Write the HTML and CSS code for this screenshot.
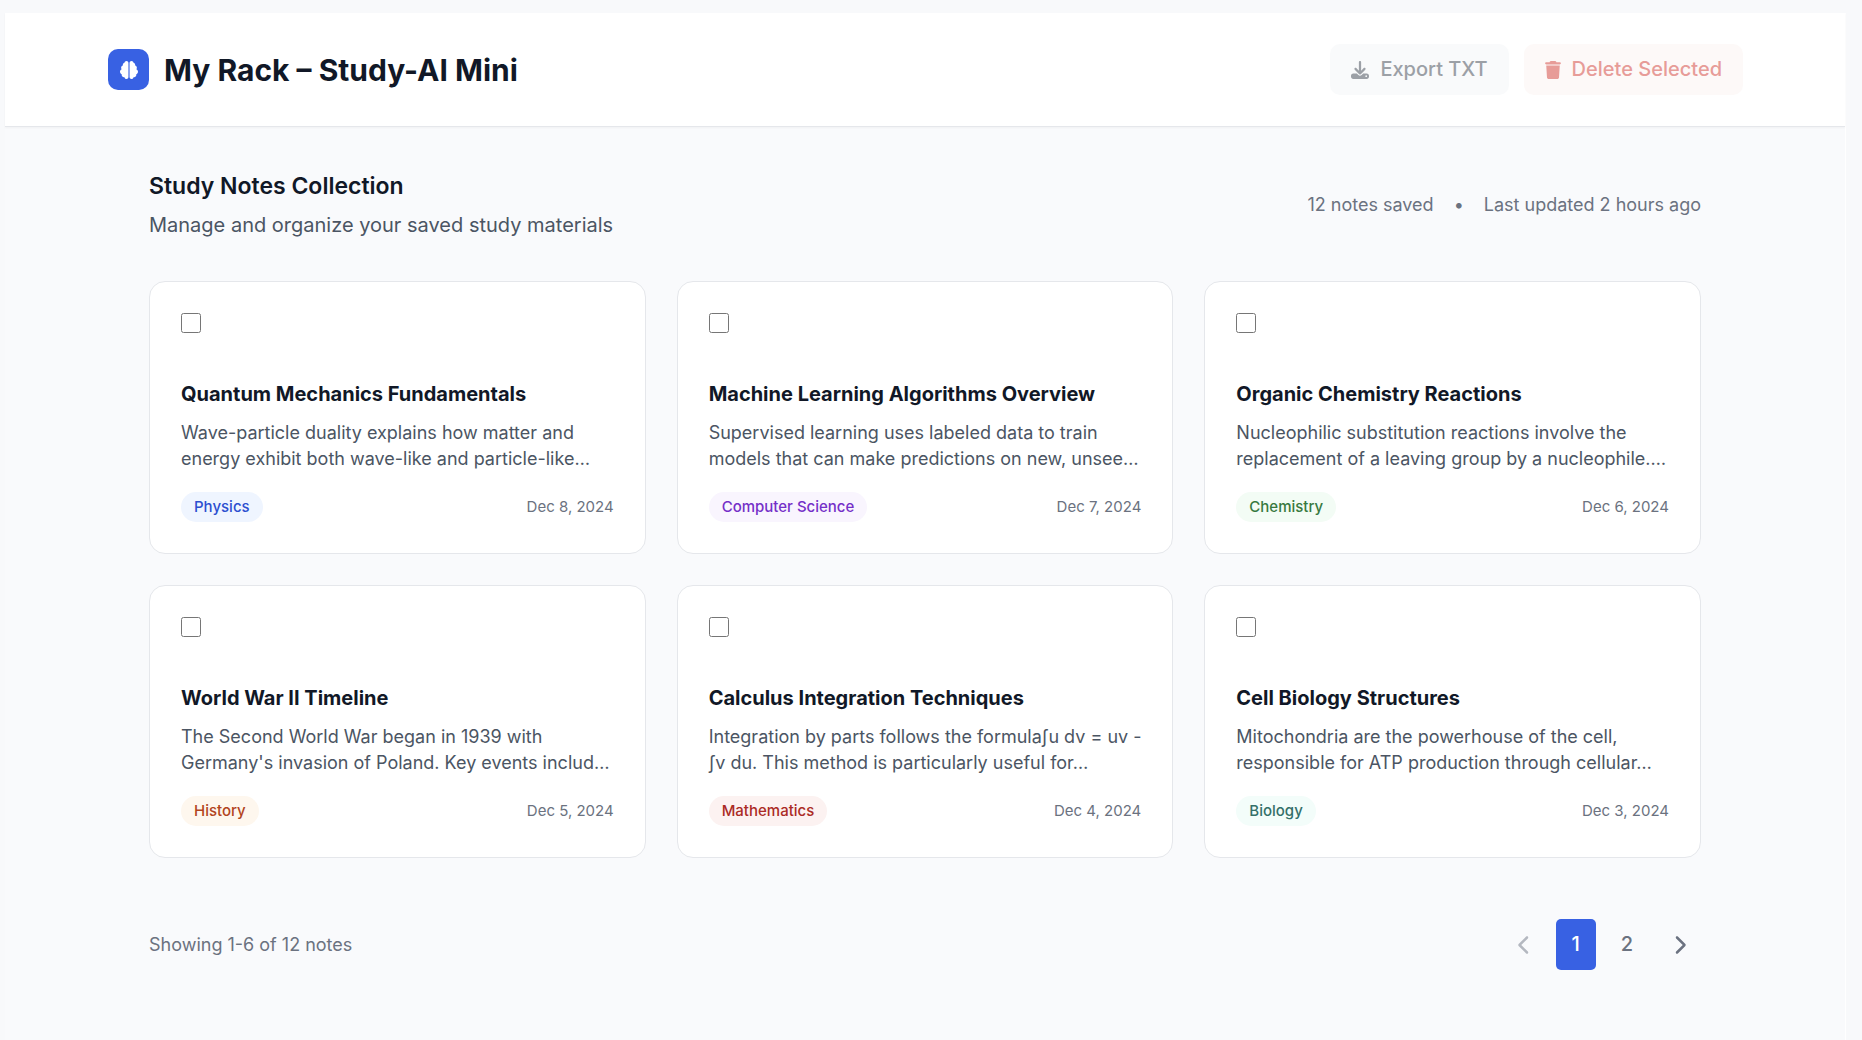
FILE: index.html
```html
<!DOCTYPE html>
<html lang="en">
<head>
<meta charset="utf-8">
<meta name="viewport" content="width=device-width, initial-scale=1">
<title>My Rack – Study-AI Mini</title>
<link rel="stylesheet" href="styles.css">
</head>
<body>
<div class="app">
  <header class="topbar">
    <div class="brand">
      <span class="brand-logo">
        <svg viewBox="0 0 512 512" width="18" height="18" fill="currentColor" aria-hidden="true"><path d="M184 0c30.900 0 56 25.100 56 56V456c0 30.900-25.100 56-56 56c-28.900 0-52.700-21.900-55.700-50.100c-5.200 1.400-10.700 2.100-16.300 2.100c-35.300 0-64-28.700-64-64c0-7.400 1.300-14.600 3.600-21.200C21.400 367.400 0 338.200 0 304c0-31.900 18.700-59.500 45.800-72.300C37.100 220.800 32 207 32 192c0-30.700 21.600-56.300 50.400-62.600C80.800 123.900 80 118 80 112c0-29.900 20.600-55.100 48.300-62.100C131.300 21.900 155.100 0 184 0zM328 0c28.900 0 52.600 21.900 55.700 49.900c27.800 7 48.300 32.100 48.300 62.100c0 6-.8 11.900-2.400 17.400c28.800 6.200 50.400 31.900 50.400 62.600c0 15-5.100 28.800-13.800 39.700C493.300 244.500 512 272.100 512 304c0 34.200-21.400 63.400-51.600 74.800c2.300 6.600 3.600 13.800 3.600 21.200c0 35.300-28.700 64-64 64c-5.600 0-11.100-.7-16.300-2.100c-3 28.200-26.800 50.100-55.700 50.100c-30.900 0-56-25.100-56-56V56c0-30.900 25.100-56 56-56z"/></svg>
      </span>
      <h1 class="brand-title">My Rack – Study-AI Mini</h1>
    </div>
    <div class="actions">
      <button type="button" class="btn btn-export" disabled>
        <svg viewBox="0 0 512 512" width="18" height="18" fill="currentColor" aria-hidden="true"><path d="M288 32c0-17.700-14.300-32-32-32s-32 14.300-32 32V274.700l-73.400-73.400c-12.500-12.500-32.800-12.500-45.300 0s-12.500 32.800 0 45.300l128 128c12.500 12.500 32.800 12.500 45.300 0l128-128c12.500-12.500 12.500-32.800 0-45.300s-32.800-12.500-45.300 0L288 274.700V32zM64 352c-35.300 0-64 28.700-64 64v32c0 35.300 28.700 64 64 64H448c35.300 0 64-28.700 64-64V416c0-35.300-28.700-64-64-64H346.500l-45.300 45.300c-25 25-65.500 25-90.500 0L165.500 352H64zm368 56a24 24 0 1 1 0 48 24 24 0 1 1 0-48z"/></svg>
        Export TXT
      </button>
      <button type="button" class="btn btn-delete" disabled>
        <svg viewBox="0 0 448 512" width="16" height="18" fill="currentColor" aria-hidden="true"><path d="M135.200 17.700L128 32H32C14.300 32 0 46.300 0 64S14.300 96 32 96H416c17.700 0 32-14.300 32-32s-14.300-32-32-32H320l-7.200-14.300C307.400 6.800 296.300 0 284.200 0H163.800c-12.100 0-23.200 6.800-28.600 17.700zM416 128H32L53.200 467c1.600 25.300 22.600 45 47.900 45H346.900c25.300 0 46.300-19.700 47.900-45L416 128z"/></svg>
        Delete Selected
      </button>
    </div>
  </header>

  <main class="content">
    <section class="intro">
      <div>
        <h2 class="intro-title">Study Notes Collection</h2>
        <p class="intro-text">Manage and organize your saved study materials</p>
      </div>
      <div class="stats">
        <span>12 notes saved</span>
        <span>•</span>
        <span>Last updated 2 hours ago</span>
      </div>
    </section>

    <section class="grid">
      <article class="card">
        <input type="checkbox" class="card-check" aria-labelledby="note-1">
        <h3 class="card-title" id="note-1">Quantum Mechanics Fundamentals</h3>
        <p class="card-text">Wave-particle duality explains how matter and energy exhibit both wave-like and particle-like…</p>
        <div class="card-foot"><span class="tag tag-blue">Physics</span><time datetime="2024-12-08">Dec 8, 2024</time></div>
      </article>
      <article class="card">
        <input type="checkbox" class="card-check" aria-labelledby="note-2">
        <h3 class="card-title" id="note-2">Machine Learning Algorithms Overview</h3>
        <p class="card-text">Supervised learning uses labeled data to train models that can make predictions on new, unsee…</p>
        <div class="card-foot"><span class="tag tag-purple">Computer Science</span><time datetime="2024-12-07">Dec 7, 2024</time></div>
      </article>
      <article class="card">
        <input type="checkbox" class="card-check" aria-labelledby="note-3">
        <h3 class="card-title" id="note-3">Organic Chemistry Reactions</h3>
        <p class="card-text">Nucleophilic substitution reactions involve the replacement of a leaving group by a nucleophile.…</p>
        <div class="card-foot"><span class="tag tag-green">Chemistry</span><time datetime="2024-12-06">Dec 6, 2024</time></div>
      </article>
      <article class="card">
        <input type="checkbox" class="card-check" aria-labelledby="note-4">
        <h3 class="card-title" id="note-4">World War II Timeline</h3>
        <p class="card-text">The Second World War began in 1939 with Germany's invasion of Poland. Key events includ…</p>
        <div class="card-foot"><span class="tag tag-orange">History</span><time datetime="2024-12-05">Dec 5, 2024</time></div>
      </article>
      <article class="card">
        <input type="checkbox" class="card-check" aria-labelledby="note-5">
        <h3 class="card-title" id="note-5">Calculus Integration Techniques</h3>
        <p class="card-text card-text-formula">Integration by parts follows the formula∫u dv = uv -<br>∫v du. This method is particularly useful for…</p>
        <div class="card-foot"><span class="tag tag-red">Mathematics</span><time datetime="2024-12-04">Dec 4, 2024</time></div>
      </article>
      <article class="card">
        <input type="checkbox" class="card-check" aria-labelledby="note-6">
        <h3 class="card-title" id="note-6">Cell Biology Structures</h3>
        <p class="card-text">Mitochondria are the powerhouse of the cell, responsible for ATP production through cellular…</p>
        <div class="card-foot"><span class="tag tag-teal">Biology</span><time datetime="2024-12-03">Dec 3, 2024</time></div>
      </article>
    </section>

    <div class="pager">
      <p class="pager-info">Showing 1-6 of 12 notes</p>
      <nav class="pager-nav" aria-label="Pages">
        <button type="button" class="page page-prev" aria-label="Previous page" disabled>
          <svg viewBox="0 0 320 512" width="13" height="20" fill="currentColor" aria-hidden="true"><path d="M9.400 233.400c-12.500 12.500-12.500 32.800 0 45.300l192 192c12.500 12.500 32.800 12.500 45.300 0s12.500-32.800 0-45.300L77.300 256 246.600 86.600c12.500-12.500 12.500-32.800 0-45.300s-32.800-12.500-45.300 0l-192 192z"/></svg>
        </button>
        <button type="button" class="page page-current" aria-current="page">1</button>
        <button type="button" class="page">2</button>
        <button type="button" class="page page-next" aria-label="Next page">
          <svg viewBox="0 0 320 512" width="13" height="20" fill="currentColor" aria-hidden="true"><path d="M310.600 233.400c12.500 12.500 12.500 32.800 0 45.300l-192 192c-12.500 12.500-32.800 12.500-45.300 0s-12.500-32.800 0-45.300L242.700 256 73.400 86.600c-12.500-12.500-12.500-32.800 0-45.300s32.800-12.500 45.300 0l192 192z"/></svg>
        </button>
      </nav>
    </div>
  </main>
</div>
</body>
</html>
```
FILE: styles.css
```css
* {
  box-sizing: border-box;
  margin: 0;
}

body {
  min-height: 100vh;
  display: flex;
  padding: 13px 16px 0 5px;
  background: #f8f9fb;
  color: #111827;
  font-family: Inter, "Liberation Sans", sans-serif;
}

.app {
  flex: 1;
  background: #f9fafc;
  border-right: 1px solid #fff;
}

.topbar {
  display: flex;
  justify-content: space-between;
  align-items: center;
  padding: 31px 102px 31px 103px;
  background: #fff;
  border-bottom: 1px solid #e5e7eb;
  box-shadow: 0 1px 2px rgba(0, 0, 0, 0.04);
}

.brand,
.actions {
  display: flex;
  align-items: center;
  gap: 15px;
}

.brand-logo {
  display: flex;
  align-items: center;
  justify-content: center;
  width: 41px;
  height: 41px;
  border-radius: 10px;
  background: #3861e3;
  color: #fff;
}

.brand-title {
  font-size: 30px;
  line-height: 40px;
  font-weight: 700;
}

.btn {
  display: flex;
  align-items: center;
  gap: 11px;
  padding: 10px 21px;
  border: 0;
  border-radius: 10px;
  font: 500 20px/31px Inter, "Liberation Sans", sans-serif;
}

.btn-export {
  background: #f9fafb;
  color: #9ca0a6;
}

.btn-delete {
  background: #fdf9f8;
  color: #e79c98;
}

.content {
  max-width: 1614px;
  margin: 0 auto;
  padding: 41px 31px;
}

.intro {
  display: flex;
  justify-content: space-between;
  align-items: center;
  margin-bottom: 40px;
}

.intro-title {
  margin-bottom: 6px;
  font-size: 23px;
  line-height: 36px;
  font-weight: 600;
}

.intro-text {
  color: #4b5563;
  font-size: 20px;
  line-height: 31px;
}

.stats {
  display: flex;
  gap: 20px;
  color: #6b7280;
  font-size: 18px;
  line-height: 26px;
}

.grid {
  display: grid;
  grid-template-columns: repeat(3, minmax(0, 1fr));
  gap: 31px;
}

.card {
  padding: 31px;
  border: 1px solid #e5e7eb;
  border-radius: 16px;
  background: #fff;
}

.card-check {
  display: block;
  width: 20px;
  height: 20px;
  margin: 0 0 46px;
}

.card-title {
  margin-bottom: 10px;
  font-size: 20px;
  line-height: 31px;
  font-weight: 700;
}

.card-text {
  margin-bottom: 20px;
  color: #4b5563;
  font-size: 18px;
  line-height: 26px;
}

/* Keeps the minus sign on the same line as the formula */
.card-text-formula {
  white-space: nowrap;
}

.card-foot {
  display: flex;
  justify-content: space-between;
  align-items: center;
  color: #6b7280;
  font-size: 15px;
  line-height: 20px;
}

.tag {
  padding: 5px 13px;
  border-radius: 15px;
  font-weight: 500;
}

.tag-blue { background: #eff5ff; color: #2c4fd0; }
.tag-purple { background: #f9f5fe; color: #7530c8; }
.tag-green { background: #f3fcf5; color: #37793f; }
.tag-orange { background: #fef7ee; color: #b2441d; }
.tag-red { background: #fcf2f1; color: #ab2b25; }
.tag-teal { background: #f3fdfa; color: #347069; }

.pager {
  display: flex;
  justify-content: space-between;
  align-items: center;
  margin-top: 61px;
}

.pager-info {
  color: #6b7280;
  font-size: 18px;
  line-height: 26px;
}

.pager-nav {
  display: flex;
  gap: 10px;
}

.page {
  display: flex;
  align-items: center;
  justify-content: center;
  min-width: 40px;
  padding: 10px 15px;
  border: 0;
  border-radius: 5px;
  background: transparent;
  color: #6b7280;
  font: 500 20px/31px Inter, "Liberation Sans", sans-serif;
}

.page-current {
  background: #3861e3;
  color: #fff;
}

.page-prev {
  color: #b4b8c0;
}
```
